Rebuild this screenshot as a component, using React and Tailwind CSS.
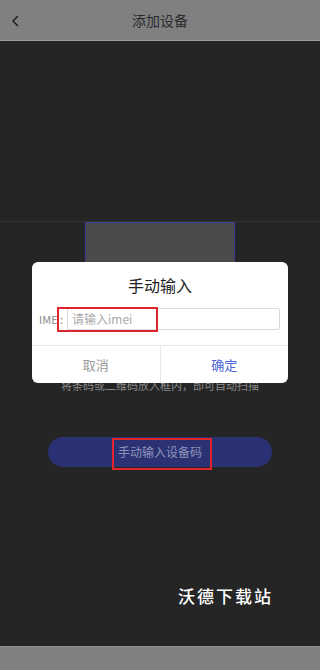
export default function App() {
  const font = { fontFamily: '"Noto Sans CJK SC", "Noto Sans", sans-serif' };
  return (
    <div className="relative w-[320px] h-[670px] flex flex-col overflow-hidden bg-[#262626]" style={font}>
      <div className="h-[41px] shrink-0 bg-[#808080] border-b border-[#9a9a9a] flex items-center relative">
        <svg className="absolute left-[10px] top-[14px]" width="12" height="14" viewBox="0 0 12 14">
          <path d="M8 2 L3 7 L8 12" fill="none" stroke="#1a1a1a" strokeWidth="1.4" />
        </svg>
        <div className="flex-1 text-center text-[14px] text-[#2a2a2a] leading-none">添加设备</div>
      </div>
      <div className="flex-1 flex flex-col items-center pt-[180px] bg-[#252525]">
        <div className="w-full h-px bg-[#333333]"></div>
        <div className="w-[150px] h-[150px] bg-[#4b4b4b] border border-[#3a3f95]"></div>
        <div className="mt-[5px] text-[11px] leading-[16px] text-[#8a8a8a]">将条码或二维码放入框内，即可自动扫描</div>
        <div className="mt-[44px] w-[224px] h-[30px] rounded-full bg-[#2b3273] flex items-center justify-center text-[12px] text-[#8f92bb]">手动输入设备码</div>
      </div>
      <div className="h-[24px] shrink-0 bg-[#808080] border-t border-[#8e8e8e]"></div>

      <div className="absolute left-[32px] top-[262px] w-[256px] h-[121px] bg-white rounded-[6px] flex flex-col">
        <div className="pt-[11px] h-[46px] text-center text-[16px] leading-[24px] text-[#222]">手动输入</div>
        <div className="flex items-center h-[22px] pl-[7px] pr-[8px]">
          <span className="text-[11px] text-[#888] w-[28px]">IME :</span>
          <div className="flex-1 h-[22px] border border-[#d8dbe6] rounded-[2px] flex items-center pl-[4px] text-[12px] text-[#aaa]">请输入imei</div>
        </div>
        <div className="mt-[15px] border-t border-[#e8e8e8] flex flex-1">
          <div className="flex-1 flex items-center justify-center text-[13px] text-[#999] border-r border-[#e8e8e8]">取消</div>
          <div className="flex-1 flex items-center justify-center text-[13px] text-[#4b5fd6]">确定</div>
        </div>
      </div>

      <div className="absolute left-[57px] top-[307px] w-[101px] h-[25px] border-2 border-[#e0262b]"></div>
      <div className="absolute left-[112px] top-[438px] w-[100px] h-[32px] border-2 border-[#e0262b]"></div>
      <div className="absolute left-[178px] top-[584px] text-[17px] font-medium tracking-[2px] text-white leading-[24px]">沃德下载站</div>
    </div>
  );
}
